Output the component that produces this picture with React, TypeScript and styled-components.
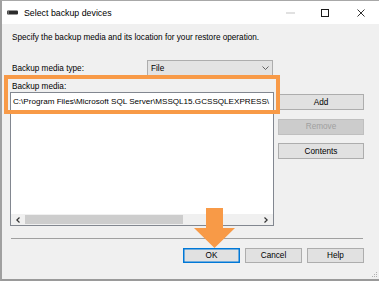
import React from "react";
import styled, { createGlobalStyle } from "styled-components";

const Global = createGlobalStyle`
  html, body { margin: 0; padding: 0; background: #ffffff; overflow: hidden; }
  * { box-sizing: border-box; }
`;

const Window = styled.div`
  position: relative;
  width: 379px;
  height: 281px;
  display: flex;
  flex-direction: column;
  border-top: 1px solid #a8a8a8;
  border-left: 2px solid #a0a0a0;
  border-bottom: 2px solid #9a9a9a;
  font-family: "Liberation Sans", Arial, sans-serif;
  color: #000;
`;

const TitleBar = styled.div`
  height: 23px;
  flex: none;
  background: #ffffff;
  display: flex;
  align-items: center;
  padding-left: 5px;
`;

const TitleText = styled.span`
  font-size: 8.8px;
  margin-left: 6px;
  color: #000;
`;

const Controls = styled.div`
  margin-left: auto;
  display: flex;
  align-items: center;
  height: 100%;
`;

const Ctl = styled.div<{ $w: number }>`
  width: ${(p) => p.$w}px;
  height: 100%;
  display: flex;
  align-items: center;
  justify-content: center;
`;

const Body = styled.div`
  flex: 1;
  background: #f0f0f0;
  padding: 9px 15px 0 8px;
  display: flex;
  flex-direction: column;
  font-size: 8.2px;
`;

const Desc = styled.div`
  line-height: 10px;
  height: 10px;
  margin-left: 2px;
  white-space: nowrap;
`;

const TypeRow = styled.div`
  margin-top: 17px;
  height: 16px;
  display: flex;
  align-items: center;
`;

const TypeLabel = styled.span`
  width: 135px;
  margin-left: 2px;
  flex: none;
`;

const Select = styled.div`
  width: 126px;
  height: 16px;
  background: #e3e3e3;
  border: 1px solid #adadad;
  display: flex;
  align-items: center;
  padding-left: 3px;
  padding-right: 3px;
`;

const SelectText = styled.span`
  flex: 1;
`;

const Main = styled.div`
  margin-top: 6px;
  display: flex;
  gap: 4px;
`;

const LeftCol = styled.div`
  width: 264px;
  display: flex;
  flex-direction: column;
`;

const MediaLabel = styled.div`
  height: 10px;
  line-height: 10px;
  margin-left: 2px;
`;

const ListBox = styled.div`
  height: 134px;
  background: #ffffff;
  border: 1px solid #828790;
  display: flex;
  flex-direction: column;
`;

const Items = styled.div`
  flex: 1;
  overflow: hidden;
`;

const Item = styled.div`
  height: 17px;
  line-height: 17px;
  padding-left: 2px;
  white-space: nowrap;
  overflow: hidden;
  font-size: 8.1px;
`;

const HScroll = styled.div`
  height: 11px;
  flex: none;
  background: #f0f0f0;
  display: flex;
  align-items: center;
`;

const ScrollArrow = styled.div`
  width: 14px;
  height: 100%;
  flex: none;
  display: flex;
  align-items: center;
  justify-content: center;
`;

const Thumb = styled.div`
  height: 9px;
  background: #cdcdcd;
  flex: none;
`;

const Track = styled.div`
  flex: 1;
`;

const RightCol = styled.div`
  width: 86px;
  padding-top: 12px;
  display: flex;
  flex-direction: column;
  gap: 8.5px;
`;

const Button = styled.div<{ $disabled?: boolean; $default?: boolean; $w?: number }>`
  height: ${(p) => (p.$w ? 15 : 16)}px;
  width: ${(p) => (p.$w ? `${p.$w}px` : "100%")};
  background: ${(p) => (p.$disabled ? "#cccccc" : "#e1e1e1")};
  border: 1px solid
    ${(p) => (p.$default ? "#0078d7" : p.$disabled ? "#bfbfbf" : "#adadad")};
  box-shadow: ${(p) => (p.$default ? "inset 0 0 0 0.5px #0078d7" : "none")};
  color: ${(p) => (p.$disabled ? "#a0a0a0" : "#000")};
  display: flex;
  align-items: center;
  justify-content: center;
  flex: none;
`;

const Separator = styled.div`
  margin: 12px 1px 0 1px;
  height: 1px;
  background: #a0a0a0;
`;

const BottomRow = styled.div`
  margin-top: 9px;
  display: flex;
  justify-content: flex-end;
  gap: 5px;
`;

const Highlight = styled.div`
  position: absolute;
  left: 2px;
  top: 74px;
  width: 276px;
  height: 39px;
  border: 4px solid #f89a47;
  pointer-events: none;
`;

const Arrow = styled.svg`
  position: absolute;
  left: 188px;
  top: 206px;
`;

const Grip = styled.svg`
  position: absolute;
  right: 1px;
  bottom: 1px;
`;

export default function App() {
  return (
    <>
      <Global />
      <Window>
        <TitleBar>
          <svg width="11" height="5" viewBox="0 0 11 5">
            <rect x="0" y="0.5" width="11" height="4" rx="1" fill="#2b2b2b" />
            <rect x="0.5" y="1" width="1.5" height="3" fill="#6a6a6a" />
          </svg>
          <TitleText>Select backup devices</TitleText>
          <Controls>
            <Ctl $w={34}>
              <svg width="9" height="2" viewBox="0 0 9 2">
                <rect x="0" y="0.5" width="9" height="1" fill="#c4c4c4" />
              </svg>
            </Ctl>
            <Ctl $w={36}>
              <svg width="8" height="8" viewBox="0 0 8 8">
                <rect x="0.5" y="0.5" width="7" height="7" fill="none" stroke="#1a1a1a" strokeWidth="1" />
              </svg>
            </Ctl>
            <Ctl $w={36}>
              <svg width="8" height="8" viewBox="0 0 8 8">
                <path d="M0.5 0.5 L7.5 7.5 M7.5 0.5 L0.5 7.5" stroke="#1a1a1a" strokeWidth="0.9" />
              </svg>
            </Ctl>
          </Controls>
        </TitleBar>
        <Body>
          <Desc>Specify the backup media and its location for your restore operation.</Desc>
          <TypeRow>
            <TypeLabel>Backup media type:</TypeLabel>
            <Select>
              <SelectText>File</SelectText>
              <svg width="7" height="4" viewBox="0 0 7 4">
                <path d="M0.5 0.5 L3.5 3.5 L6.5 0.5" fill="none" stroke="#555" strokeWidth="0.9" />
              </svg>
            </Select>
          </TypeRow>
          <Main>
            <LeftCol>
              <MediaLabel>Backup media:</MediaLabel>
              <ListBox>
                <Items>
                  <Item>C:\Program Files\Microsoft SQL Server\MSSQL15.GCSSQLEXPRESS\</Item>
                </Items>
                <HScroll>
                  <ScrollArrow>
                    <svg width="4" height="6" viewBox="0 0 4 6">
                      <path d="M3.5 0.5 L0.8 3 L3.5 5.5" fill="none" stroke="#333" strokeWidth="1.2" />
                    </svg>
                  </ScrollArrow>
                  <Thumb style={{ width: 158 }} />
                  <Track />
                  <ScrollArrow>
                    <svg width="4" height="6" viewBox="0 0 4 6">
                      <path d="M0.5 0.5 L3.2 3 L0.5 5.5" fill="none" stroke="#333" strokeWidth="1.2" />
                    </svg>
                  </ScrollArrow>
                </HScroll>
              </ListBox>
            </LeftCol>
            <RightCol>
              <Button>Add</Button>
              <Button $disabled>Remove</Button>
              <Button>Contents</Button>
            </RightCol>
          </Main>
          <Separator />
          <BottomRow>
            <Button $w={57} $default>OK</Button>
            <Button $w={57}>Cancel</Button>
            <Button $w={57}>Help</Button>
          </BottomRow>
        </Body>
        <Highlight />
        <Arrow width="46" height="42" viewBox="0 0 46 42">
          <path d="M16 1 L33 1 L33 21 L45 21 L24.5 41 L4 21 L16 21 Z" fill="#f89a47" />
        </Arrow>
        <Grip width="7" height="7" viewBox="0 0 7 7">
          <g fill="#b0b0b0">
            <rect x="5" y="1" width="1" height="1" />
            <rect x="3" y="3" width="1" height="1" />
            <rect x="5" y="3" width="1" height="1" />
            <rect x="1" y="5" width="1" height="1" />
            <rect x="3" y="5" width="1" height="1" />
            <rect x="5" y="5" width="1" height="1" />
          </g>
        </Grip>
      </Window>
    </>
  );
}
